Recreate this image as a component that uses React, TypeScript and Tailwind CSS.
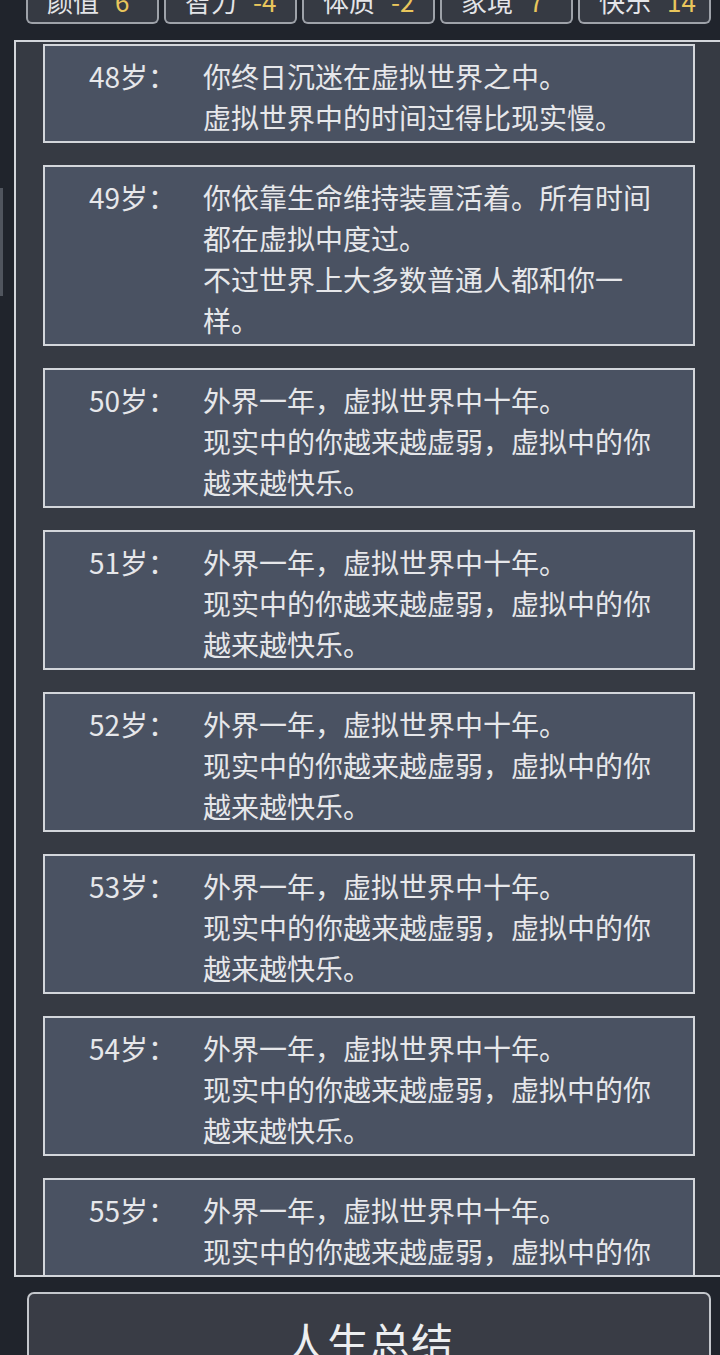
const stats = [
  { label: "颜值", value: "6" },
  { label: "智力", value: "-4" },
  { label: "体质", value: "-2" },
  { label: "家境", value: "7" },
  { label: "快乐", value: "14" },
];

const tenYears = ["外界一年，虚拟世界中十年。", "现实中的你越来越虚弱，虚拟中的你越来越快乐。"];

const events = [
  { age: 48, lines: ["你终日沉迷在虚拟世界之中。", "虚拟世界中的时间过得比现实慢。"] },
  { age: 49, lines: ["你依靠生命维持装置活着。所有时间都在虚拟中度过。", "不过世界上大多数普通人都和你一样。"] },
  { age: 50, lines: tenYears },
  { age: 51, lines: tenYears },
  { age: 52, lines: tenYears },
  { age: 53, lines: tenYears },
  { age: 54, lines: tenYears },
  { age: 55, lines: tenYears },
];

const font = { fontFamily: '"Noto Sans CJK SC", "Noto Sans", sans-serif' };

function StatTab({ label, value }: { label: string; value: string }) {
  return (
    <div className="w-[133px] h-[52px] flex items-end gap-[16px] pl-[19px] pb-[7px] bg-[#363a43] border-2 border-t-0 border-[#9ea2a9] rounded-b-[6px] text-[26px] leading-[28px]">
      <span className="text-[#e4e5e8]">{label}</span>
      <span className="text-[#e9c65c]">{value}</span>
    </div>
  );
}

function EventCard({ age, lines }: { age: number; lines: string[] }) {
  return (
    <div className="w-[652px] shrink-0 flex bg-[#4a5262] border-2 border-[#d3d6db] pt-[10px] pb-[3px] pl-[44px] pr-[20px] text-[28px] leading-[41px] text-[#e6e7ea]">
      <div className="w-[114px] shrink-0">{age}岁：</div>
      <div className="flex-1 flex flex-col">
        {lines.map((line, i) => (
          <p key={i}>{line}</p>
        ))}
      </div>
    </div>
  );
}

export default function App() {
  return (
    <div className="w-[720px] h-[1355px] overflow-hidden bg-[#20242c]" style={font}>
      {/* attribute tabs, partly scrolled out of view */}
      <div className="flex gap-[5px] pl-[26px] -mt-[28px]">
        {stats.map((s) => (
          <StatTab key={s.label} label={s.label} value={s.value} />
        ))}
      </div>

      <div className="flex mt-[16px]">
        <div className="w-[3px] h-[108px] mt-[148px] bg-[#50555e] shrink-0" />
        {/* life log */}
        <div className="ml-[11px] w-[706px] h-[1237px] overflow-hidden bg-[#363a43] border-2 border-r-0 border-[#d3d6db]">
          <div className="flex flex-col gap-[22px] pt-[2px] pl-[27px]">
            {events.map((e) => (
              <EventCard key={e.age} age={e.age} lines={e.lines} />
            ))}
          </div>
        </div>
      </div>

      <div className="mt-[15px] ml-[27px] w-[684px] h-[90px] bg-[#393c45] border-2 border-[#c4c7cc] rounded-[7px] flex justify-center pt-[26px]">
        <span className="text-[42px] leading-[42px] text-[#eceef0]">人生总结</span>
      </div>
    </div>
  );
}
